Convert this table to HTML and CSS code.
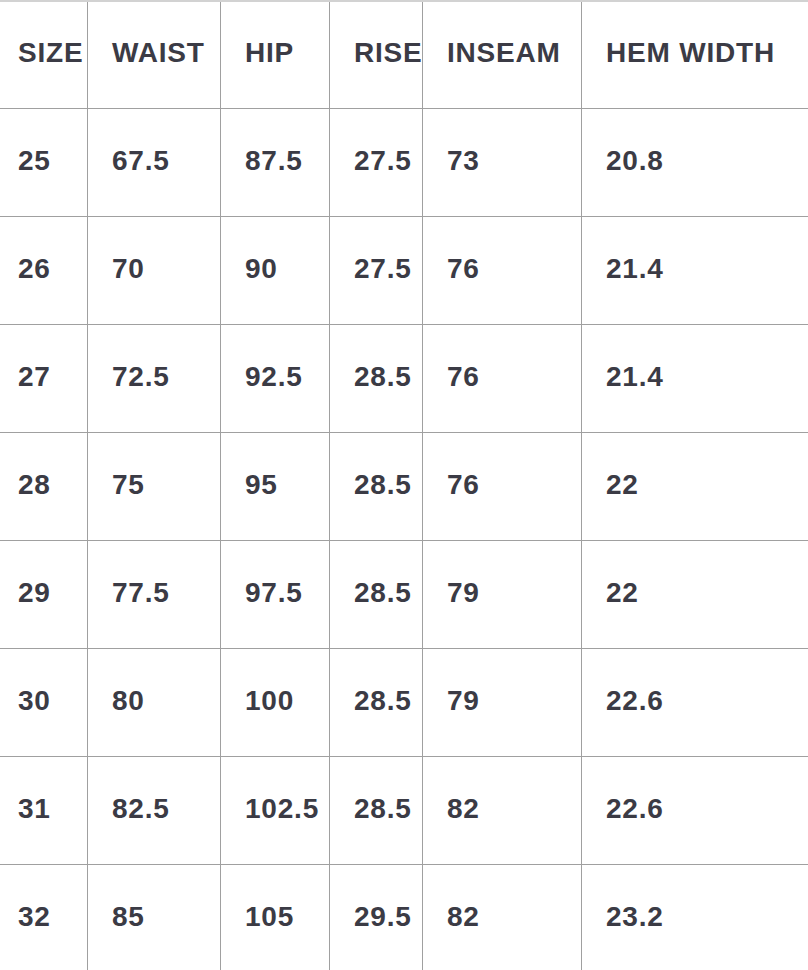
FILE: index.html
```html
<!DOCTYPE html>
<html>
<head>
<meta charset="utf-8">
<link rel="stylesheet" href="styles.css">
</head>
<body>
<table class="size-table">
  <colgroup>
    <col class="c1"><col class="c2"><col class="c3"><col class="c4"><col class="c5"><col class="c6">
  </colgroup>
  <thead>
    <tr><th>SIZE</th><th>WAIST</th><th>HIP</th><th>RISE</th><th>INSEAM</th><th>HEM WIDTH</th></tr>
  </thead>
  <tbody>
    <tr><td>25</td><td>67.5</td><td>87.5</td><td>27.5</td><td>73</td><td>20.8</td></tr>
    <tr><td>26</td><td>70</td><td>90</td><td>27.5</td><td>76</td><td>21.4</td></tr>
    <tr><td>27</td><td>72.5</td><td>92.5</td><td>28.5</td><td>76</td><td>21.4</td></tr>
    <tr><td>28</td><td>75</td><td>95</td><td>28.5</td><td>76</td><td>22</td></tr>
    <tr><td>29</td><td>77.5</td><td>97.5</td><td>28.5</td><td>79</td><td>22</td></tr>
    <tr><td>30</td><td>80</td><td>100</td><td>28.5</td><td>79</td><td>22.6</td></tr>
    <tr><td>31</td><td>82.5</td><td>102.5</td><td>28.5</td><td>82</td><td>22.6</td></tr>
    <tr><td>32</td><td>85</td><td>105</td><td>29.5</td><td>82</td><td>23.2</td></tr>
  </tbody>
</table>
</body>
</html>
```
FILE: styles.css
```css
html, body {
  margin: 0;
  padding: 0;
  background: #ffffff;
  overflow: hidden;
}
.size-table {
  border-collapse: separate;
  border-spacing: 0;
  table-layout: fixed;
  width: 830px;
  border-top: 2px solid #d2d2d2;
  font-family: "Liberation Sans", Arial, sans-serif;
  font-weight: bold;
  font-size: 28px;
  letter-spacing: 0.8px;
  color: #3b3b45;
}
.c1 { width: 88px; }
.c2 { width: 133px; }
.c3 { width: 109px; }
.c4 { width: 93px; }
.c5 { width: 159px; }
.c6 { width: 248px; }
.size-table th,
.size-table td {
  box-sizing: border-box;
  height: 108px;
  padding: 0 0 3px 24px;
  text-align: left;
  vertical-align: middle;
  border-right: 1px solid #a0a0a0;
  border-bottom: 1px solid #a0a0a0;
  white-space: nowrap;
  overflow: visible;
}
.size-table thead th {
  height: 107px;
  padding-bottom: 5px;
}
.size-table th:first-child,
.size-table td:first-child {
  padding-left: 18px;
}
```
